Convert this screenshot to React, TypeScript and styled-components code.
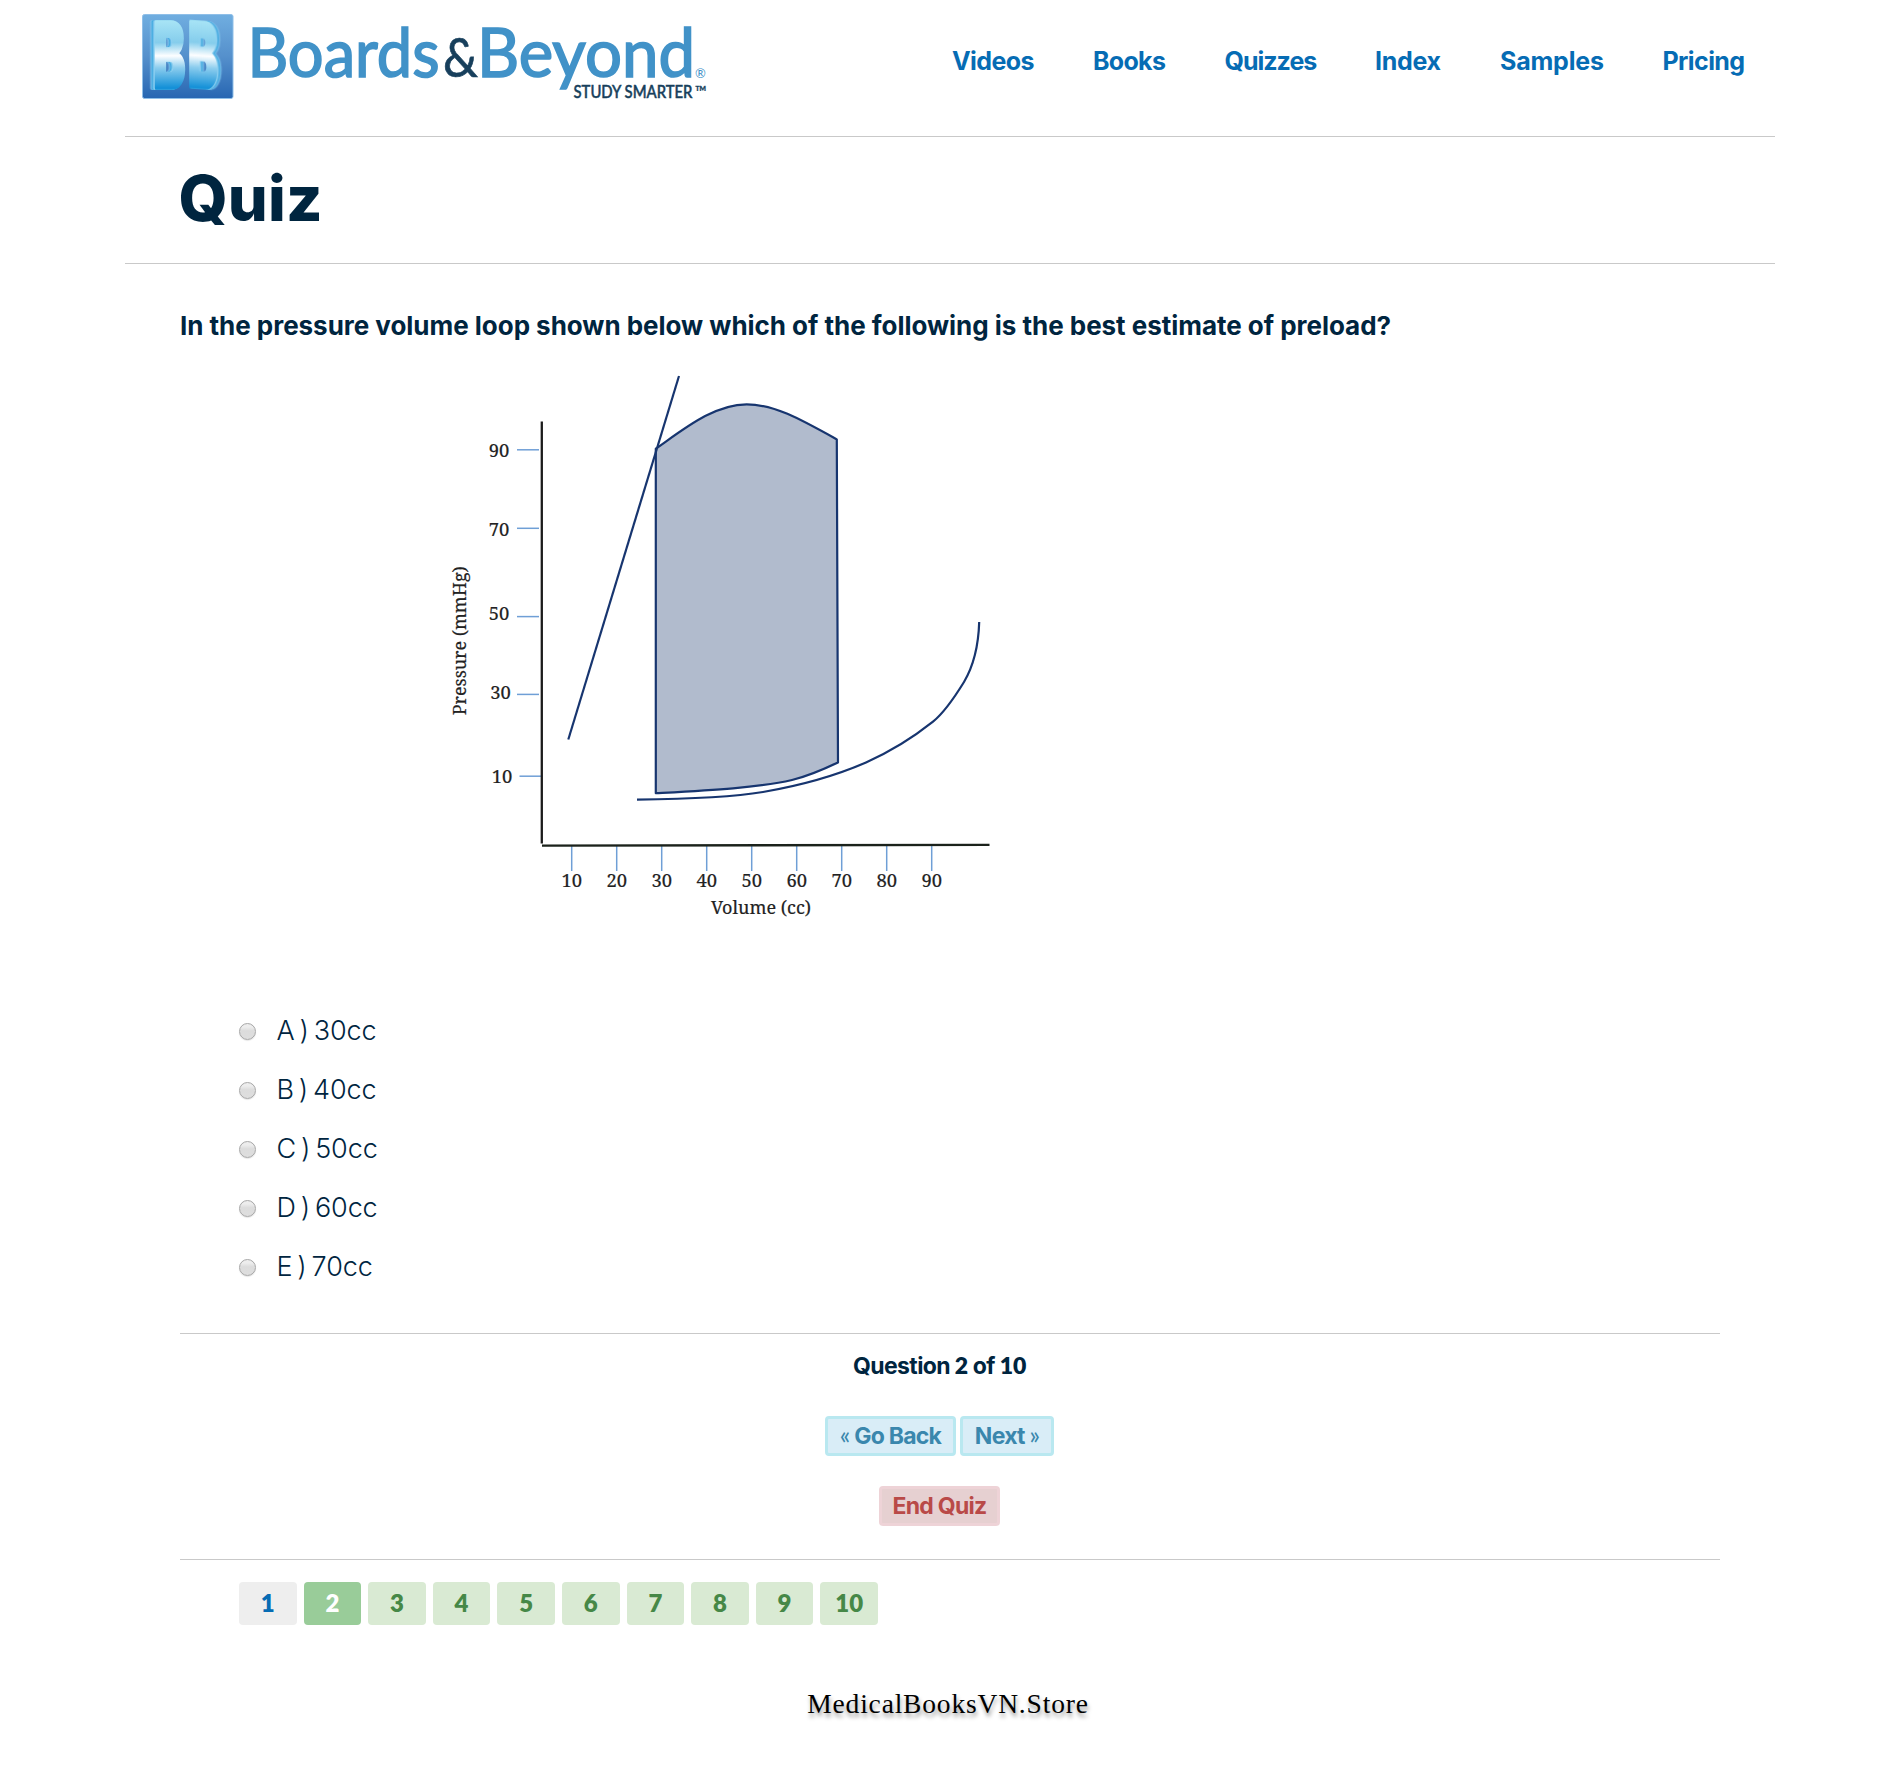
import React, { useState } from 'react';
import styled, { createGlobalStyle } from 'styled-components';

const sans = 'Inter, "Liberation Sans", sans-serif';
const navy = '#00253f';
const rule = '#c9c9c9';

const GlobalStyle = createGlobalStyle`
  body {
    margin: 0;
    background: #fff;
    color: ${navy};
    font-family: ${sans};
    font-variant-ligatures: none;
  }
`;

const Page = styled.div`
  width: 1650px;
  height: 1767px;
  margin: 0 auto 0 125px;
`;

const Header = styled.header`
  display: flex;
  height: 136px;
  border-bottom: 1px solid ${rule};
`;

const LogoLink = styled.a`
  display: block;
  width: 827px;
  height: 120px;
`;

const Emblem = styled.text<{ $depth: number }>`
  filter: drop-shadow(${(p) => p.$depth}px 0.5px 0 #8fd0f0) drop-shadow(${(p) => p.$depth}px 0.5px 0 #37a3dd)
    drop-shadow(${(p) => p.$depth * 0.7}px 0 0 #8ccbef);
`;

const Nav = styled.nav`
  display: grid;
  grid-template-columns: 141px 131.5px 150.5px 125px 162.5px auto;
  align-self: start;
  padding-top: 46px;
`;

const NavLink = styled.a<{ $track: number }>`
  color: #066cb4;
  font-size: 25px;
  font-weight: 650;
  line-height: 30px;
  letter-spacing: ${(p) => p.$track}px;
  text-decoration: none;
  cursor: pointer;
`;

const TitleBar = styled.div`
  display: flex;
  align-items: center;
  height: 122px;
  padding: 0 55px 4px;
  border-bottom: 1px solid ${rule};
`;

const Title = styled.h1`
  margin: 0 0 0 -1.5px;
  font-size: 63px;
  font-weight: 800;
  line-height: 74px;
  letter-spacing: 0.1px;
`;

const Content = styled.main`
  padding: 44px 55px 0;
`;

const Question = styled.h2`
  margin: 0;
  font-size: 26px;
  font-weight: 700;
  line-height: 36px;
  letter-spacing: -0.03px;
  white-space: nowrap;
`;

const Figure = styled.figure`
  width: 580px;
  height: 570px;
  margin: 16px 0 71px 250px;
`;

const Options = styled.div`
  display: flex;
  flex-direction: column;
  padding: 0 0 37.5px 59px;
`;

const Option = styled.label`
  display: flex;
  align-items: center;
  gap: 20.5px;
  height: 58.9px;
  font-size: 27px;
  font-weight: 350;
  letter-spacing: -0.1px;
  word-spacing: -2.6px;
`;

const Radio = styled.input`
  appearance: none;
  flex: none;
  box-sizing: border-box;
  width: 17px;
  height: 17px;
  margin: 2px 0 0;
  border: 1px solid #a6a6a6;
  border-radius: 50%;
  background: linear-gradient(#ededed 20%, #dcdcdc 45%, #dedede);
  box-shadow: 0 1px 1px #e6e6e6;

  &:checked {
    background: radial-gradient(circle, #555 30%, #dedede 35%);
  }
`;

const Controls = styled.section`
  display: flex;
  flex-direction: column;
  align-items: center;
  padding: 16px 21px 33px 0;
  border-top: 1px solid ${rule};
  border-bottom: 1px solid ${rule};
`;

const Progress = styled.p`
  margin: 0 0 35px;
  font-size: 23px;
  font-weight: 650;
  line-height: 30px;
  letter-spacing: -0.6px;
`;

const Figures = styled.span`
  font-family: Lato, ${sans};
  font-weight: 800;
  letter-spacing: -0.2px;
`;

const ButtonRow = styled.div`
  display: flex;
  gap: 4px;
  margin-bottom: 30px;
`;

const Button = styled.button<{ $danger?: boolean; $width: number }>`
  box-sizing: border-box;
  width: ${(p) => p.$width}px;
  height: 40px;
  padding: 0;
  border: 3px solid ${(p) => (p.$danger ? '#eed3d7' : '#b9e8f0')};
  border-radius: 4px;
  background: ${(p) => (p.$danger ? '#e6d0d1' : '#d9edf7')};
  color: ${(p) => (p.$danger ? '#b94a48' : '#3a87ad')};
  font: 650 23px/34px ${sans};
  letter-spacing: -0.75px;
  white-space: nowrap;
`;

const Chevron = styled.span`
  font: 500 24px/20px Lato, ${sans};
`;

const Pager = styled.div`
  display: flex;
  gap: 7px;
  padding: 22px 0 0 59px;
`;

type PageState = 'seen' | 'current' | 'todo';
const pageColors: Record<PageState, [string, string]> = {
  seen: ['#eee', '#066cb4'],
  current: ['#9c9', '#fff'],
  todo: ['#d9ead3', '#468847'],
};

const PageLink = styled.a<{ $state: PageState }>`
  width: 57.6px;
  height: 43px;
  border-radius: 4px;
  background: ${(p) => pageColors[p.$state][0]};
  color: ${(p) => pageColors[p.$state][1]};
  font: 800 24px/42px Lato, ${sans};
  text-align: center;
`;

const Watermark = styled.footer`
  padding: 64px 4px 0 0;
  color: #000;
  font: 27.5px/30px "Palatino Linotype", "Liberation Serif", serif;
  letter-spacing: 0.82px;
  text-align: center;
  text-shadow: 1px 4px 4px rgba(0, 0, 0, 0.4);
`;

function Logo() {
  return (
    <svg width="600" height="120" viewBox="125 0 600 120" role="img" aria-label="Boards & Beyond">
      <defs>
        <linearGradient id="tile" x1="0" y1="0" x2="0" y2="1">
          <stop offset="0" stopColor="#70aee0" />
          <stop offset="0.5" stopColor="#5590cc" />
          <stop offset="1" stopColor="#2766b2" />
        </linearGradient>
        <linearGradient id="face" gradientUnits="userSpaceOnUse" x1="0" y1="-66" x2="0" y2="0">
          <stop offset="0" stopColor="#a6e3f5" />
          <stop offset="0.32" stopColor="#85cdec" />
          <stop offset="0.52" stopColor="#fdfeff" />
          <stop offset="0.7" stopColor="#8ccdee" />
          <stop offset="1" stopColor="#1591d8" />
        </linearGradient>
      </defs>
      <rect x="142.5" y="14.5" width="90.5" height="84" rx="2" fill="url(#tile)" stroke="#8fbfe8" />
      <g fontFamily={sans} fontWeight="900" fontSize="90" fill="url(#face)" stroke="url(#face)" strokeWidth="3.6" strokeLinejoin="round">
        <Emblem $depth={-2.2} transform="translate(153.5 87.5) scale(.53 1)">B</Emblem>
        <Emblem $depth={3.6} transform="translate(188 86.5) skewY(4) scale(.49 1)">B</Emblem>
      </g>
      <g fontFamily={`Lato, ${sans}`}>
        <g fill="#4192c8" stroke="#4192c8" strokeWidth="1.7" fontSize="68">
          <text x="247.5" y="76.5" textLength="192" lengthAdjust="spacingAndGlyphs">Boards</text>
          <text x="477" y="76.5" textLength="218" lengthAdjust="spacingAndGlyphs">Beyond</text>
        </g>
        <text x="443" y="77" fontSize="54" fill="#173f5c" stroke="#173f5c" strokeWidth="0.7" textLength="35" lengthAdjust="spacingAndGlyphs">&amp;</text>
        <text x="695" y="77.5" fontSize="13" fill="#4192c8">®</text>
        <text x="573.5" y="98" fontSize="17" fontWeight="500" fill="#173f5c" stroke="#173f5c" strokeWidth="0.5" textLength="119" lengthAdjust="spacingAndGlyphs">STUDY SMARTER</text>
        <text x="695" y="98" fontSize="17" fill="#173f5c" stroke="#173f5c" strokeWidth="0.3" textLength="12" lengthAdjust="spacingAndGlyphs">™</text>
      </g>
    </svg>
  );
}

const pressureTicks = [
  { label: '90', x: 499, y: 449.8, base: 457 },
  { label: '70', x: 499, y: 528.3, base: 535.5 },
  { label: '50', x: 499, y: 616.6, base: 620 },
  { label: '30', x: 500.5, y: 694.4, base: 698.7 },
  { label: '10', x: 502, y: 776.2, base: 783 },
];
const volumeTicks = ['10', '20', '30', '40', '50', '60', '70', '80', '90'];

function LoopChart() {
  return (
    <svg width="580" height="570" viewBox="430 360 580 570">
      <g stroke="#6f9fd6" strokeWidth="1.5">
        {pressureTicks.map((t) => (
          <line key={t.label} x1={t.label === '10' ? 519.5 : 517} x2={t.label === '10' ? 541 : 539} y1={t.y} y2={t.y} />
        ))}
        {volumeTicks.map((t, i) => (
          <line key={t} x1={571.7 + i * 45} x2={571.7 + i * 45} y1="846" y2="871" />
        ))}
      </g>
      <path d="M541.8 421.5V843.5" stroke="#1b1b1b" strokeWidth="2.3" />
      <path d="M542 845.7L989.5 844.8" stroke="#1b221b" strokeWidth="2.3" />
      <g stroke="#17356f" strokeWidth="2.2" fill="none" strokeLinejoin="round">
        <path
          fill="#b1bbcd"
          d="M655.8 448.7C684 429 714 404.3 746.7 404.3C774 404.3 800 419 836.8 439.4L838 762.4C820 771 808 776 792 780C758 788 706 790.5 655.8 793.2Z"
        />
        <path d="M568.3 739.5L679 376" />
        <path d="M637 799.7C690 799 730 797.5 763 792C795 786.5 835 776 866 762.5C892 751 915 736 933 721.7C946 711 956 695 964 682C974 665 978.5 645 979.2 622" />
      </g>
      <g fontFamily={'"Noto Serif", "Liberation Serif", serif'} fontSize="18.4" fill="#222" stroke="#222" strokeWidth="0.2" textAnchor="middle">
        {pressureTicks.map((t) => (
          <text key={t.label} x={t.x} y={t.base}>{t.label}</text>
        ))}
        {volumeTicks.map((t, i) => (
          <text key={t} x={571.7 + i * 45} y="887.2">{t}</text>
        ))}
        <text x="761" y="913.5" textLength="100" lengthAdjust="spacingAndGlyphs">Volume (cc)</text>
        <text transform="translate(466 640.7) rotate(-90)" textLength="149" lengthAdjust="spacingAndGlyphs">Pressure (mmHg)</text>
      </g>
    </svg>
  );
}

const navItems: [string, number][] = [
  ['Videos', -0.6], ['Books', -0.7], ['Quizzes', -1], ['Index', -0.3], ['Samples', -0.2], ['Pricing', -0.6],
];
const answers = ['A ) 30cc', 'B ) 40cc', 'C ) 50cc', 'D ) 60cc', 'E ) 70cc'];

export default function App() {
  const [choice, setChoice] = useState('');
  return (
    <>
      <GlobalStyle />
      <Page>
        <Header>
          <LogoLink><Logo /></LogoLink>
          <Nav>
            {navItems.map(([name, track]) => (
              <NavLink key={name} $track={track}>{name}</NavLink>
            ))}
          </Nav>
        </Header>
        <TitleBar><Title>Quiz</Title></TitleBar>
        <Content>
          <Question>In the pressure volume loop shown below which of the following is the best estimate of preload?</Question>
          <Figure><LoopChart /></Figure>
          <Options>
            {answers.map((a) => (
              <Option key={a}>
                <Radio type="radio" name="answer" checked={choice === a} onChange={() => setChoice(a)} />
                {a}
              </Option>
            ))}
          </Options>
          <Controls>
            <Progress>Question <Figures>2</Figures> of <Figures>10</Figures></Progress>
            <ButtonRow>
              <Button $width={131}><Chevron>«</Chevron> Go Back</Button>
              <Button $width={94}>Next <Chevron>»</Chevron></Button>
            </ButtonRow>
            <Button $danger $width={121}>End Quiz</Button>
          </Controls>
          <Pager>
            {Array.from({ length: 10 }, (_, i) => (
              <PageLink key={i} $state={i === 0 ? 'seen' : i === 1 ? 'current' : 'todo'}>{i + 1}</PageLink>
            ))}
          </Pager>
        </Content>
        <Watermark>MedicalBooksVN.Store</Watermark>
      </Page>
    </>
  );
}
